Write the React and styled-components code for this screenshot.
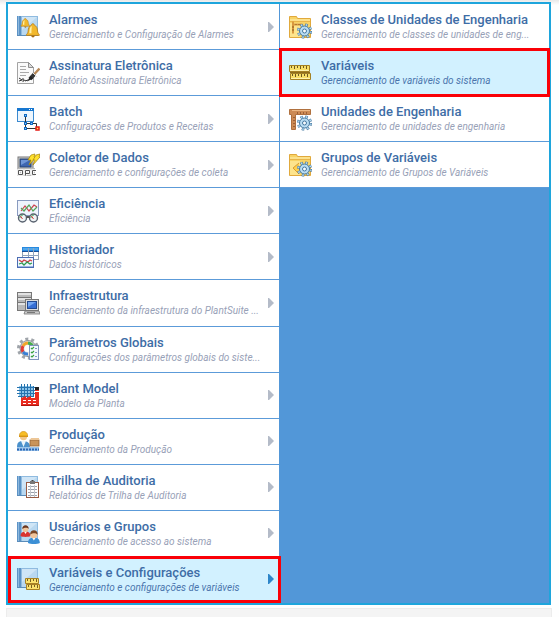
import React from "react";
import styled, { createGlobalStyle } from "styled-components";

const GlobalStyle = createGlobalStyle`
  *, *::before, *::after {
    box-sizing: border-box;
  }
  body {
    margin: 0;
    background: #fefefe;
    font-family: Roboto, "Liberation Sans", sans-serif;
  }
  ul {
    margin: 0;
    padding: 0;
    list-style: none;
  }
`;

const Page = styled.div`
  display: flex;
  flex-direction: column;
  min-height: 100vh;
  padding: 2px 8px 0 6px;
  background: linear-gradient(#e8e8e8, #fefefe 5px);
`;

const Menu = styled.nav`
  flex: 1;
  display: grid;
  grid-template-columns: minmax(0, 272fr) minmax(0, 269fr);
  border: 2px solid #1ea5dc;
  background: #5297d8;
`;

const Panel = styled.ul`
  display: grid;
  grid-template-rows: repeat(13, minmax(46px, 1fr));
  &.main {
    background: #fff;
    border-right: 1px solid #5297d8;
  }
`;

const Item = styled.li`
  position: relative;
  display: flex;
  min-width: 0;
  background: ${({ $active }) => ($active ? "#d2f1ff" : "#fff")};
  border-bottom: 1px solid #5c9bd9;
  &.marked {
    z-index: 1;
  }
  &.marked::after {
    content: "";
    position: absolute;
    inset: -2px -1px;
    border: 3px solid #fa0007;
    pointer-events: none;
  }
  &.marked:last-child::after {
    inset: -1px -2px -1px 0;
  }
`;

const ItemLink = styled.a`
  flex: 1;
  min-width: 0;
  display: flex;
  align-items: center;
  gap: 9px;
  padding: 0 5px 0 8px;
  text-decoration: none;
`;

const Icon = styled.svg`
  flex: none;
  width: 24px;
  height: 24px;
`;

const Arrow = styled.svg`
  flex: none;
  width: 6px;
  height: 10px;
  fill: ${({ $active }) => ($active ? "#2d86c9" : "#b4bbc8")};
`;

const Labels = styled.span`
  flex: 1;
  min-width: 0;
  display: flex;
  flex-direction: column;
  white-space: nowrap;
`;

const Title = styled.span`
  color: #3e6da6;
  font-size: 13px;
  font-weight: 500;
  line-height: 16px;
`;

const Description = styled.span`
  color: ${({ $active }) => ($active ? "#4a75ad" : "#98a1b7")};
  font-size: 10px;
  font-style: italic;
  line-height: 13px;
`;

const Footer = styled.div`
  height: 9px;
  margin: 3px -1px 0 0;
  background: #f4f4f4;
  border: 1px solid #ececec;
  border-bottom: 0;
`;

/* shared drawings */

const Book = () => (
  <g>
    <rect x="1" y="1" width="21" height="20" fill="#8fbbe0" />
    <rect x="1" y="1" width="4" height="20" fill="#5c93c6" />
    <rect x="2" y="1" width="1" height="20" fill="#8db8de" />
    <rect x="6" y="2" width="15" height="18" fill="#b9d8f0" />
    <path d="M6 2h15L6 15z" fill="#cfe5f6" />
    <path d="M1 20.5h21" stroke="#5a8cba" />
  </g>
);

const Bell = () => (
  <g>
    <path
      d="M5 .6c.8 0 1.1.5 1.1 1.1 2 .7 2.5 2.5 2.6 4.6.1 1.3.6 2 1.3 2.7v.8H0v-.8c.8-.7 1.2-1.4 1.3-2.7.1-2.1.6-3.9 2.6-4.6 0-.6.3-1.1 1.1-1.1z"
      fill="#f2b82c"
      stroke="#b67a12"
      strokeWidth=".6"
    />
    <path d="M3.3 3c-.8 1-.9 3-1.1 5h1.7c0-2 0-4 .4-5.5z" fill="#fff0a8" />
    <path d="M3.8 10h2.6c0 1.8-2.6 1.8-2.6 0z" fill="#a86a10" />
  </g>
);

const Folder = () => (
  <g>
    <path d="M1.5 1.5h7l1 2h13v19h-21z" fill="#f8d365" stroke="#e1a93c" />
    <path d="M2 6.5h20" stroke="#e8b54a" />
    <path d="M2 5h20" stroke="#fff0b4" />
    <path d="M2 8h10v14H2z" fill="#fde48c" />
  </g>
);

const Gear = () => (
  <g>
    <circle
      cx="16.5"
      cy="16"
      r="6.3"
      fill="none"
      stroke="#44779f"
      strokeWidth="2.6"
      strokeDasharray="2.5 2.448"
    />
    <circle cx="16.5" cy="16" r="5" fill="#b8dcf2" stroke="#44779f" />
    <circle
      cx="16.5"
      cy="16"
      r="6.3"
      fill="none"
      stroke="#b8dcf2"
      strokeWidth="1.8"
      strokeDasharray="1.3 3.648"
      strokeDashoffset="-.6"
    />
    <circle cx="16.5" cy="16" r="2" fill="#f8fbfd" stroke="#44779f" />
  </g>
);

const Person = ({ shirt, hair }) => (
  <g>
    <path d="M0 11c0-3 1.5-4.5 5-4.5s5 1.5 5 4.5c-2 1.2-8 1.2-10 0z" fill={shirt} />
    <path d="M3.5 6.5L5 9l1.5-2.5z" fill="#fff" />
    <circle cx="5" cy="4" r="3" fill="#f0c59b" />
    <path d="M1.8 4c-.3-5 6.7-5 6.4 0-1-1.5-4-2-6.4 0z" fill={hair} />
  </g>
);

/* menu icons */

const icons = {
  alarms: (
    <>
      <Book />
      <g transform="translate(5 3) scale(.85)">
        <Bell />
      </g>
      <g transform="translate(10.5 8) scale(1.27)">
        <Bell />
      </g>
    </>
  ),
  signature: (
    <>
      <path d="M1.5 1.5h11l5 5v16h-16z" fill="#fafafa" stroke="#a3a3a3" />
      <path d="M12.5 1.5v5h5z" fill="#dcdcdc" stroke="#8e8e8e" />
      <path d="M4 5.5h6M4 8.5h6M4 11.5h9M4 14.5h6" stroke="#a9a9a9" />
      <path d="M3 17l3 2-3 1M6 19c1-3 2-1 1 1s3-3 2 0l3-1" fill="none" stroke="#333" />
      <path d="M23.5 7.5L17 14.5" stroke="#b88958" strokeWidth="2.4" />
      <path d="M18.5 13L14 18" stroke="#353535" strokeWidth="4" />
      <path d="M17 12l4 4" stroke="#dedede" />
      <path d="M14.5 15l2.5 2.5-6 3z" fill="#222" />
    </>
  ),
  batch: (
    <>
      <rect x="1.5" y="1.5" width="16" height="13" fill="#edf6fe" stroke="#3b8ad0" />
      <rect x="1" y="1" width="17" height="3" fill="#1777d0" />
      <path d="M13 2.5h1M15 2.5h1" stroke="#fff" />
      <path d="M9.5 8v13.5h11M9.5 16.5h11v4" fill="none" stroke="#333" />
      <g fill="#8bc8ff" stroke="#126ac0">
        <rect x="8.5" y="7.5" width="2" height="2" />
        <rect x="8.5" y="15.5" width="2" height="2" />
        <rect x="14.5" y="15.5" width="2" height="2" />
        <rect x="8.5" y="20.5" width="2" height="2" />
      </g>
      <rect x="20" y="20" width="3" height="3" fill="#ffe14c" stroke="#e51a14" strokeWidth="1.5" />
    </>
  ),
  collector: (
    <>
      <rect x="2" y="4" width="15" height="12" fill="#d2d2cc" stroke="#77777a" />
      <rect x="4" y="6" width="11" height="8" fill="#3e66b1" stroke="#27416f" />
      <path d="M5 7h9L5 12z" fill="#6f96d7" />
      <path d="M1 15h18v8H1z" fill="#b9b9b9" />
      <path d="M15 2l4-1-1 3h2l-7 8 2-5h-3z" fill="#ffe12f" stroke="#a98404" strokeWidth=".7" />
      <path d="M20 2l4-1-1 3h1l-7 8 2-5h-2z" fill="#ffe12f" stroke="#a98404" strokeWidth=".7" />
      <path
        d="M2.5 17.5h4v4h-4zM9.5 22.5v-5h4v3h-4M20 17.5h-3.5v4H20"
        fill="none"
        stroke="#fff"
        strokeWidth="2.6"
      />
      <path
        d="M2.5 17.5h4v4h-4zM9.5 22.5v-5h4v3h-4M20 17.5h-3.5v4H20"
        fill="none"
        stroke="#555"
      />
    </>
  ),
  efficiency: (
    <>
      <rect x="1.5" y="1.5" width="21" height="15" fill="#eff4fd" stroke="#899bc0" />
      <path d="M5 12l4-5 4 5 5-6 3 2" fill="none" stroke="#cc4550" strokeWidth="1.2" />
      <path d="M5 9l3 3 5-6 4 6 4-4" fill="none" stroke="#55a55b" strokeWidth="1.2" />
      <g fill="#eef3f5" stroke="#59626f" strokeWidth="1.4">
        <circle cx="6.5" cy="19" r="4" />
        <circle cx="17.5" cy="19" r="4" />
      </g>
      <path d="M4 19c0-2 1-3 3-3M15 19c0-2 1-3 3-3" fill="none" stroke="#42a35c" />
      <path d="M6.5 20l-2-3M17.5 20l-2-3" stroke="#d23d3d" />
      <path d="M10.5 18h3" stroke="#555" strokeWidth="2" />
    </>
  ),
  historian: (
    <>
      <rect x="6.5" y="2.5" width="16" height="12" fill="#fff" stroke="#90a0b5" />
      <path d="M6 2h17v4H6z" fill="#2789df" />
      <path d="M7 4h15" stroke="#7cc6f8" />
      <path d="M6 6.5h17" stroke="#174f99" />
      <path d="M6 10.5h17M12.5 3v12M17.5 3v12" stroke="#92a6bd" />
      <rect x="1.5" y="12.5" width="16" height="10" fill="#eff6ff" stroke="#4b6db2" />
      <path d="M3 15l3 2 2-2 4 2 2-2 2 1" fill="none" stroke="#cf3e46" strokeWidth="1.3" />
      <path d="M3 19l3-1 2 2 3-3 3 2 2-1" fill="none" stroke="#2e9b50" strokeWidth="1.3" />
      <path d="M2 21.5h15" stroke="#9bb7e4" />
    </>
  ),
  infrastructure: (
    <>
      <rect x="1.5" y="1.5" width="14" height="18" fill="#b9b9b9" stroke="#777" />
      <path d="M2 3h13M2 8h13M2 13h13" stroke="#e2e2e2" strokeWidth="2" />
      <path d="M2 6.5h13M2 11.5h13" stroke="#777" />
      <rect x="9.5" y="8.5" width="13" height="11" fill="#ddd" stroke="#777" />
      <rect x="11.5" y="10.5" width="9" height="7" fill="#376fd4" stroke="#234a91" />
      <path d="M12 11h8l-8 5z" fill="#73a6f1" />
      <path d="M9 20h14l1 3H8z" fill="#ccc" stroke="#777" strokeWidth=".8" />
      <path d="M11 21.5h8" stroke="#777" />
    </>
  ),
  parameters: (
    <>
      <circle cx="12" cy="11.5" r="9.5" fill="none" stroke="#9fa4aa" strokeWidth="3" strokeDasharray="3 2.97" />
      <circle cx="12" cy="11.5" r="8" fill="#e2e4e6" stroke="#8d9298" />
      <path d="M12 6a6 6 0 0 0-5 3" fill="none" stroke="#f1a62b" strokeWidth="3" />
      <path d="M7 9a6 6 0 0 0 0 6" fill="none" stroke="#e33c36" strokeWidth="3" />
      <path d="M7 15a6 6 0 0 0 5 2" fill="none" stroke="#397fd5" strokeWidth="3" />
      <path d="M12 6a6 6 0 0 1 5 4" fill="none" stroke="#48ad4d" strokeWidth="3" />
      <circle cx="12" cy="11.5" r="3.5" fill="#fff" />
      <rect x="13.5" y="8.5" width="9" height="14" fill="#f4f8ff" stroke="#7f94bd" />
      <path d="M15 11l1 1 2-2M15 15l1 1 2-2M15 19l1 1 2-2" fill="none" stroke="#38a23f" strokeWidth="1.2" />
      <path d="M19 11.5h2M19 15.5h2M19 19.5h2" stroke="#8196c3" />
    </>
  ),
  plant: (
    <>
      <path d="M3 3h14v11H3z" fill="#8cc4ea" />
      <path
        d="M5.5 1v14M8.5 1v14M11.5 1v14M14.5 1v14M17.5 3v10M1 4.5h18M1 7.5h18M1 10.5h18M2 13.5h16"
        stroke="#2673ae"
      />
      <path d="M5 23v-8l5-2v2l5-2v2h4V5h4v18z" fill="#e92b20" />
      <path d="M19 4h4v3h-4z" fill="#222" />
      <path d="M19 8.5h4" stroke="#fff" />
      <path d="M7 17.5h14M7 20.5h14" stroke="#fff" strokeDasharray="3 2" />
      <path d="M5 22.5h18" stroke="#ad1711" />
    </>
  ),
  production: (
    <>
      <path d="M1 19c0-5 1-7 6-7s7 2 7 7z" fill="#4b91cc" />
      <path d="M5 12l2.5 6 2.5-6z" fill="#eaf4fb" />
      <circle cx="7.5" cy="7.5" r="3.7" fill="#f2c78b" />
      <path d="M3.5 7C3 1 12 1 11.5 7z" fill="#f7bd25" stroke="#cf8e13" strokeWidth=".7" />
      <path d="M3 7.5h9" stroke="#d89612" />
      <rect x="14" y="11" width="9" height="6" fill="#c99359" stroke="#936136" strokeWidth=".8" />
      <path d="M14 11l1-2h8v2z" fill="#ecc697" />
      <path d="M1 18h22v4H1z" fill="#9cc5ea" />
      <path d="M1 20.5h22" stroke="#2c66b5" strokeWidth="2" strokeDasharray="2 1" />
    </>
  ),
  audit: (
    <>
      <Book />
      <rect x="10.5" y="7.5" width="12" height="15" fill="#fff" stroke="#985b42" />
      <path d="M12 11.5h9M12 14.5h9M12 17.5h9M12 20.5h9" stroke="#9ba1ab" />
      <path d="M14.5 10v12M18.5 10v12" stroke="#c2c6cc" />
      <rect x="14" y="6" width="5" height="3" fill="#777" />
      <path d="M15.5 5.5h2" stroke="#444" />
    </>
  ),
  users: (
    <>
      <Book />
      <g transform="translate(4.5 4)">
        <Person shirt="#d9332f" hair="#68351e" />
      </g>
      <g transform="translate(12 9) scale(1.18)">
        <Person shirt="#3c8fd5" hair="#7b4725" />
      </g>
    </>
  ),
  settings: (
    <>
      <Book />
      <path d="M9.5 11.5h13v5h-13zM10.5 17.5h13v5h-13z" fill="#fae36e" stroke="#a78125" />
      <path
        d="M11.5 12v2M14.5 12v3M17.5 12v2M20.5 12v3M12.5 18v2M15.5 18v3M18.5 18v2M21.5 18v3"
        stroke="#79601f"
      />
    </>
  ),
  classes: (
    <>
      <Folder />
      <path d="M5 6.5v12M4 9.5h10" stroke="#d9993f" strokeWidth="2" />
      <path d="M4 12h2M4 15h2M8 9v1M11 9v1" stroke="#8b5a22" />
      <Gear />
    </>
  ),
  variables: (
    <>
      <path d="M1.5 4.5h20v6h-20zM2.5 12.5h20v6h-20z" fill="#f8df68" stroke="#a48124" />
      <path d="M2 11.5h20" stroke="#8f6d1c" />
      <path
        d="M3.5 5v2M6.5 5v3M9.5 5v2M12.5 5v3M15.5 5v2M18.5 5v3M4.5 13v2M7.5 13v3M10.5 13v2M13.5 13v3M16.5 13v2M19.5 13v3"
        stroke="#6f5a22"
      />
      <path d="M2 9.5h19M3 17.5h19" stroke="#fff4ae" />
    </>
  ),
  units: (
    <>
      <path d="M1.5 2.5h21v5h-15v15h-4v-15h-2z" fill="#cd8b55" stroke="#b0713f" />
      <path d="M4 3.5h18" stroke="#edba88" />
      <path d="M9.5 5v2M12.5 5v2M15.5 5v2M18.5 5v2M5 10.5h2M5 13.5h2M5 16.5h2M5 19.5h2" stroke="#9a6038" />
      <Gear />
    </>
  ),
  groups: (
    <>
      <Folder />
      <path d="M11 10l-6 5 6 6" fill="#ffd04b" stroke="#d99b32" />
      <Gear />
    </>
  ),
};

const mainItems = [
  { icon: "alarms", title: "Alarmes", text: "Gerenciamento e Configuração de Alarmes", sub: true },
  { icon: "signature", title: "Assinatura Eletrônica", text: "Relatório Assinatura Eletrônica" },
  { icon: "batch", title: "Batch", text: "Configurações de Produtos e Receitas", sub: true },
  { icon: "collector", title: "Coletor de Dados", text: "Gerenciamento e configurações de coleta", sub: true },
  { icon: "efficiency", title: "Eficiência", text: "Eficiência", sub: true },
  { icon: "historian", title: "Historiador", text: "Dados históricos", sub: true },
  { icon: "infrastructure", title: "Infraestrutura", text: "Gerenciamento da infraestrutura do PlantSuite ...", sub: true },
  { icon: "parameters", title: "Parâmetros Globais", text: "Configurações dos parâmetros globais do siste..." },
  { icon: "plant", title: "Plant Model", text: "Modelo da Planta", sub: true },
  { icon: "production", title: "Produção", text: "Gerenciamento da Produção", sub: true },
  { icon: "audit", title: "Trilha de Auditoria", text: "Relatórios de Trilha de Auditoria", sub: true },
  { icon: "users", title: "Usuários e Grupos", text: "Gerenciamento de acesso ao sistema", sub: true },
  { icon: "settings", title: "Variáveis e Configurações", text: "Gerenciamento e configurações de variáveis", sub: true, active: true },
];

const subItems = [
  { icon: "classes", title: "Classes de Unidades de Engenharia", text: "Gerenciamento de classes de unidades de eng..." },
  { icon: "variables", title: "Variáveis", text: "Gerenciamento de variáveis do sistema", active: true },
  { icon: "units", title: "Unidades de Engenharia", text: "Gerenciamento de unidades de engenharia" },
  { icon: "groups", title: "Grupos de Variáveis", text: "Gerenciamento de Grupos de Variáveis" },
];

const MenuItem = ({ icon, title, text, sub, active }) => {
  return (
    <Item $active={active} className={active ? "marked" : undefined}>
      <ItemLink href="#">
        <Icon viewBox="0 0 24 24" aria-hidden="true">
          {icons[icon]}
        </Icon>
        <Labels>
          <Title>{title}</Title>
          <Description $active={active}>{text}</Description>
        </Labels>
        {sub && (
          <Arrow $active={active} viewBox="0 0 6 10" aria-hidden="true">
            <path d="M0 0h1l5 5-5 5H0z" />
          </Arrow>
        )}
      </ItemLink>
    </Item>
  );
};

const App = () => {
  return (
    <>
      <GlobalStyle />
      <Page>
        <Menu>
          <Panel className="main">
            {mainItems.map((item) => (
              <MenuItem key={item.title} {...item} />
            ))}
          </Panel>
          <Panel>
            {subItems.map((item) => (
              <MenuItem key={item.title} {...item} />
            ))}
          </Panel>
        </Menu>
        <Footer />
      </Page>
    </>
  );
};

export default App;
